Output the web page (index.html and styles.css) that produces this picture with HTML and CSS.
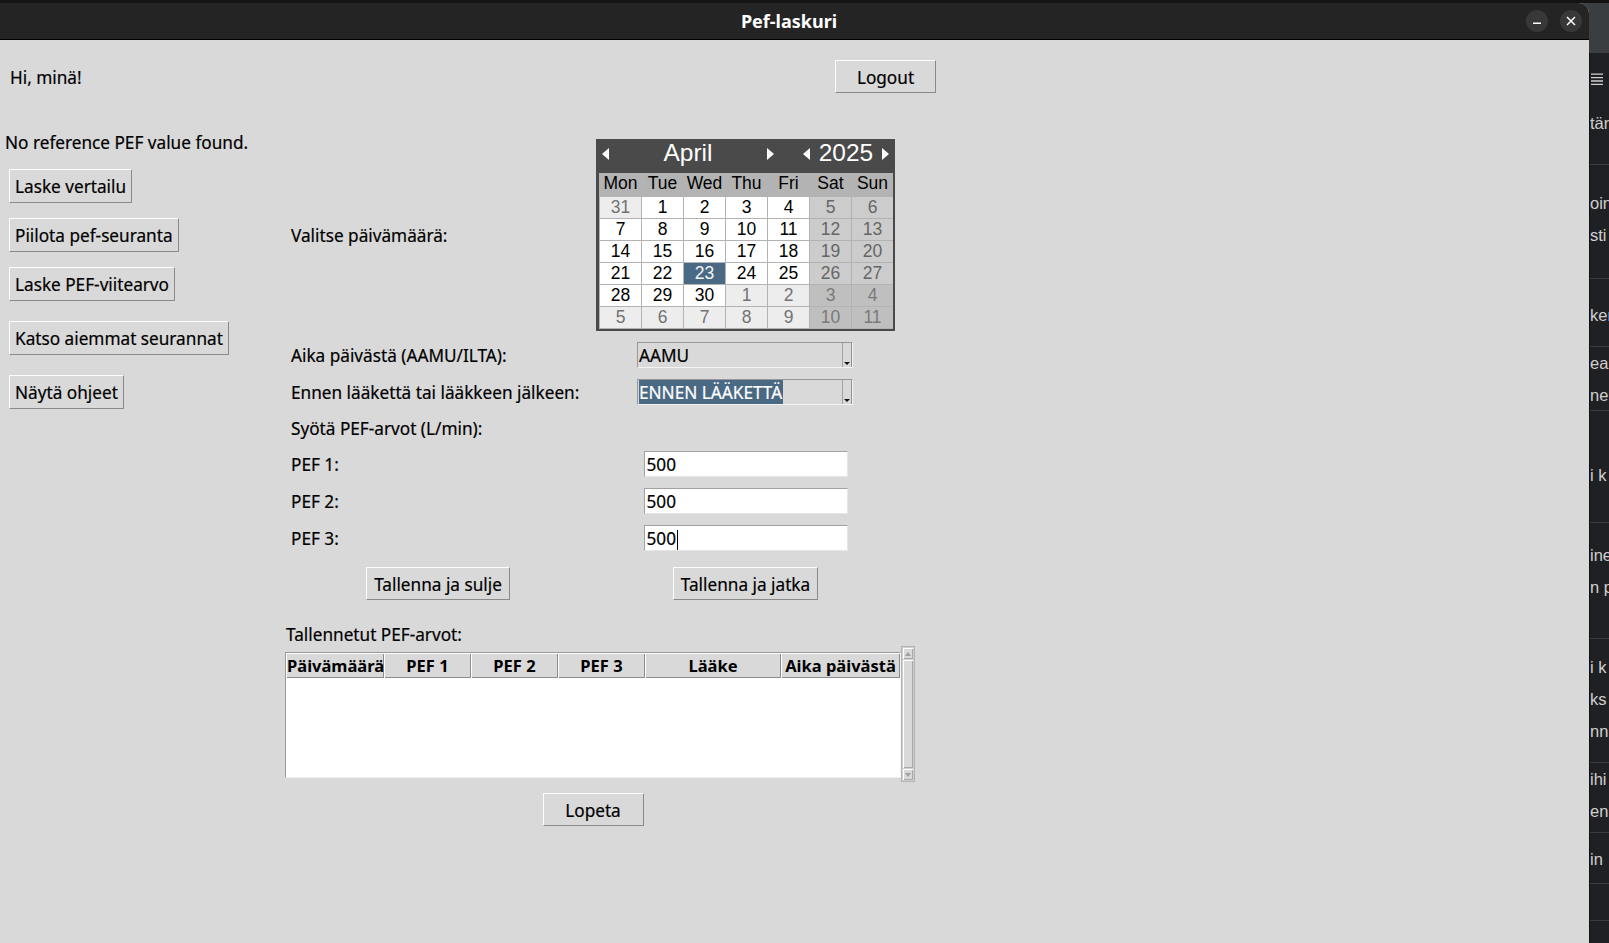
FILE: index.html
```html
<!DOCTYPE html>
<html lang="fi">
<head>
<meta charset="utf-8">
<title>Pef-laskuri</title>
<link rel="stylesheet" href="styles.css">
</head>
<body>
<div class="screen">
  <div class="topstrip"></div>
  <div class="desk">
    <div class="window">
      <header class="titlebar">
        <div class="title">Pef-laskuri</div>
        <div class="wm-buttons">
          <span class="wm-btn"><svg width="22" height="22" viewBox="0 0 22 22"><path d="M7 13.2H15" stroke="#fff" stroke-width="1.6"/></svg></span>
          <span class="wm-btn"><svg width="22" height="22" viewBox="0 0 22 22"><path d="M7 7L15 15M15 7L7 15" stroke="#fff" stroke-width="1.5"/></svg></span>
        </div>
      </header>
      <main class="content">
        <div class="topbar">
          <span class="greeting">Hi, minä!</span>
          <button class="btn btn-fixed">Logout</button>
        </div>
        <div class="body">
          <aside class="sidebar">
            <p class="noref">No reference PEF value found.</p>
            <button class="btn">Laske vertailu</button>
            <button class="btn">Piilota pef-seuranta</button>
            <button class="btn">Laske PEF-viitearvo</button>
            <button class="btn btn-gap">Katso aiemmat seurannat</button>
            <button class="btn btn-gap">Näytä ohjeet</button>
          </aside>
          <section class="form">
            <div class="frow">
              <span class="flabel">Valitse päivämäärä:</span>
              <div class="cal">
                <div class="cal-head">
                  <span class="cal-arrow cal-arrow-l"></span>
                  <span class="cal-month">April</span>
                  <span class="cal-arrow cal-arrow-r"></span>
                  <span class="cal-arrow cal-arrow-l cal-arrow-gap"></span>
                  <span class="cal-year">2025</span>
                  <span class="cal-arrow cal-arrow-r"></span>
                </div>
                <div class="cal-wd">
                  <span>Mon</span><span>Tue</span><span>Wed</span><span>Thu</span><span>Fri</span><span>Sat</span><span>Sun</span>
                </div>
                <div class="cal-days">
                  <span class="om">31</span><span>1</span><span>2</span><span>3</span><span>4</span><span class="we">5</span><span class="we">6</span>
                  <span>7</span><span>8</span><span>9</span><span>10</span><span>11</span><span class="we">12</span><span class="we">13</span>
                  <span>14</span><span>15</span><span>16</span><span>17</span><span>18</span><span class="we">19</span><span class="we">20</span>
                  <span>21</span><span>22</span><span class="sel">23</span><span>24</span><span>25</span><span class="we">26</span><span class="we">27</span>
                  <span>28</span><span>29</span><span>30</span><span class="om">1</span><span class="om">2</span><span class="omwe">3</span><span class="omwe">4</span>
                  <span class="om">5</span><span class="om">6</span><span class="om">7</span><span class="om">8</span><span class="om">9</span><span class="omwe">10</span><span class="omwe">11</span>
                </div>
              </div>
            </div>
            <div class="frow">
              <span class="flabel">Aika päivästä (AAMU/ILTA):</span>
              <div class="combo">
                <span class="combo-text">AAMU</span>
                <span class="combo-btn"><span class="combo-arrow"></span></span>
              </div>
            </div>
            <div class="frow">
              <span class="flabel">Ennen lääkettä tai lääkkeen jälkeen:</span>
              <div class="combo">
                <span class="combo-text combo-text-sel"><span class="combo-sel">ENNEN LÄÄKETTÄ</span></span>
                <span class="combo-btn"><span class="combo-arrow"></span></span>
              </div>
            </div>
            <div class="frow">
              <span class="flabel">Syötä PEF-arvot (L/min):</span>
            </div>
            <div class="frow">
              <span class="flabel">PEF 1:</span>
              <div class="entry">500</div>
            </div>
            <div class="frow">
              <span class="flabel">PEF 2:</span>
              <div class="entry">500</div>
            </div>
            <div class="frow">
              <span class="flabel">PEF 3:</span>
              <div class="entry">500<span class="caret"></span></div>
            </div>
            <div class="frow frow-btns">
              <button class="btn">Tallenna ja sulje</button>
              <button class="btn">Tallenna ja jatka</button>
            </div>
            <div class="saved-label">Tallennetut PEF-arvot:</div>
            <div class="tree-row">
              <div class="tree">
                <div class="tree-head">
                  <span class="th th-date">Päivämäärä</span>
                  <span class="th">PEF 1</span>
                  <span class="th">PEF 2</span>
                  <span class="th">PEF 3</span>
                  <span class="th">Lääke</span>
                  <span class="th">Aika päivästä</span>
                </div>
                <div class="tree-body"></div>
              </div>
              <div class="vscroll">
                <span class="sb-btn sb-up"></span>
                <span class="sb-thumb"></span>
                <span class="sb-btn sb-down"></span>
              </div>
            </div>
            <div class="lopeta-row">
              <button class="btn btn-fixed">Lopeta</button>
            </div>
          </section>
        </div>
      </main>
    </div>
    <div class="behind">
      <div class="behind-head"></div>
      <div class="behind-list">
        <div class="bl-item bl-menu"><svg width="12" height="14" viewBox="0 0 12 14"><path d="M0 1.2H12M0 4.6H12M0 8H12M0 11.4H12" stroke="#cfcfcf" stroke-width="1.3"/></svg></div>
        <div class="bl-item"><span>tär</span></div>
        <div class="bl-item"><span>oin</span><span>sti</span></div>
        <div class="bl-item"><span>ker</span></div>
        <div class="bl-item"><span>ea</span><span>ne</span></div>
        <div class="bl-item"><span>i k</span></div>
        <div class="bl-item"><span>ine</span><span>n p</span></div>
        <div class="bl-item"><span>i k</span><span>ks</span><span>nn</span></div>
        <div class="bl-item"><span>ihi</span><span>en</span></div>
        <div class="bl-item"><span>in</span></div>
        <div class="bl-item"></div>
        <div class="bl-rest"></div>
      </div>
    </div>
  </div>
</div>
</body>
</html>
```

FILE: styles.css
```css
* { box-sizing: border-box; }

html, body {
  margin: 0;
  padding: 0;
}

body {
  width: 1609px;
  height: 943px;
  overflow: hidden;
  background: #131313;
  font-family: "Noto Sans", "DejaVu Sans", sans-serif;
  font-size: 17.2px;
  color: #000;
}

.screen {
  display: flex;
  flex-direction: column;
  height: 943px;
}

.topstrip {
  height: 3px;
  flex: none;
  background: #131313;
}

.desk {
  flex: 1;
  display: flex;
  min-height: 0;
  background: #3b3e41;
}

/* ---------- main window ---------- */
.window {
  width: 1589px;
  flex: none;
  display: flex;
  flex-direction: column;
  background: #d9d9d9;
  border-top-right-radius: 10px;
  overflow: hidden;
}

.titlebar {
  height: 37px;
  flex: none;
  background: #242424;
  border-bottom: 1px solid #000;
  display: grid;
  grid-template-columns: 1fr auto 1fr;
  align-items: center;
}

.title {
  grid-column: 2;
  color: #fff;
  font-weight: 700;
  font-size: 18px;
  line-height: 24px;
  margin-right: 11px;
}

.wm-buttons {
  grid-column: 3;
  justify-self: end;
  display: flex;
  gap: 12px;
  padding-right: 7px;
}

.wm-btn {
  display: block;
  width: 22px;
  height: 22px;
  border-radius: 50%;
  background: #383838;
}

.wm-btn svg { display: block; }

.content {
  flex: 1;
  background: #d9d9d9;
  -webkit-text-stroke: 0.2px currentColor;
}

/* ---------- buttons ---------- */
.btn {
  font-family: inherit;
  font-size: 17.2px;
  color: #000;
  background: #d9d9d9;
  border: 1px solid;
  border-color: #fdfdfd #8a8a8a #8a8a8a #fdfdfd;
  border-radius: 0;
  padding: 5px 6px 3px;
  line-height: 23px;
  margin: 0;
  white-space: nowrap;
  cursor: default;
}

.btn-fixed {
  width: 101px;
  padding-left: 0;
  padding-right: 0;
  text-align: center;
}

/* ---------- top row ---------- */
.topbar {
  display: grid;
  grid-template-columns: 825px 101px;
  align-items: center;
  padding: 20px 0 0 10px;
}

.greeting,
.noref,
.flabel,
.saved-label {
  padding-top: 2px;
  line-height: 22px;
}

.body {
  display: flex;
  margin-top: 37px;
}

/* ---------- left column ---------- */
.sidebar {
  width: 286px;
  flex: none;
  display: flex;
  flex-direction: column;
  align-items: flex-start;
  gap: 15px;
  padding-left: 5px;
}

.noref { margin: 0; }

.sidebar .btn {
  margin-left: 4px;
  padding-left: 5px;
  padding-right: 5px;
  line-height: 24px;
}

.sidebar .btn-gap { margin-top: 5px; }

/* ---------- form ---------- */
.form {
  width: 629px;
  display: flex;
  flex-direction: column;
  gap: 11px;
  padding-top: 9px;
}

.frow {
  display: grid;
  grid-template-columns: 310px 299px;
  align-items: center;
}

.flabel { padding-left: 5px; }

.frow-btns { margin-top: 5px; }
.frow-btns .btn {
  justify-self: center;
  padding-left: 7px;
  padding-right: 7px;
}
.frow-btns .btn:first-child { margin-right: 6px; }

.saved-label { margin-top: 11px; }

/* ---------- calendar ---------- */
.cal {
  justify-self: center;
  width: 299px;
  background: #4a4a4a;
  border: solid #4a4a4a;
  border-width: 0 2px 2px 3px;
  font-family: "Liberation Sans", Arial, sans-serif;
  -webkit-text-stroke: 0;
}

.cal-head {
  height: 34px;
  display: flex;
  align-items: flex-start;
  padding-left: 3px;
  color: #fff;
}

.cal-arrow {
  flex: none;
  width: 0;
  height: 0;
  margin-top: 9px;
  border-top: 6px solid transparent;
  border-bottom: 6px solid transparent;
}

.cal-arrow-l { border-right: 7px solid #fff; }
.cal-arrow-r { border-left: 7px solid #fff; }
.cal-arrow-gap { margin-left: 29px; }

.cal-month,
.cal-year {
  text-align: center;
  font-size: 24.5px;
  line-height: 27px;
}

.cal-month { width: 158px; }
.cal-year { width: 72px; }

.cal-wd,
.cal-days {
  display: grid;
  grid-template-columns: repeat(7, 1fr);
  column-gap: 1px;
  padding-left: 1px;
  background: #b3b3b3;
}

.cal-wd { height: 23px; }

.cal-wd span {
  text-align: center;
  font-size: 17.5px;
  line-height: 20px;
}

.cal-days {
  grid-auto-rows: 21px;
  row-gap: 1px;
  padding-top: 1px;
  padding-bottom: 1px;
}

.cal-days span {
  background: #fff;
  text-align: center;
  font-size: 17.5px;
  line-height: 21px;
  color: #000;
}

.cal-days .we { background: #cccccc; color: #666; }
.cal-days .om { background: #ededed; color: #737373; }
.cal-days .omwe { background: #bfbfbf; color: #7a7a7a; }
.cal-days .sel { background: #4a6984; color: #f4f4f4; }

/* ---------- combobox ---------- */
.combo {
  justify-self: start;
  margin-left: 41px;
  width: 216px;
  height: 26px;
  display: flex;
  background: #d9d9d9;
  border: 1px solid;
  border-color: #979797 #f4f4f4 #f4f4f4 #979797;
}

.combo-text {
  flex: 1;
  padding-left: 1px;
  padding-top: 2px;
  line-height: 22px;
  white-space: nowrap;
  overflow: hidden;
}

.combo-text-sel { padding-top: 0; }

.combo-sel {
  display: block;
  width: fit-content;
  height: 24px;
  padding: 2px 1px 0 0;
  line-height: 22px;
  background: #4a6984;
  color: #fff;
}

.combo-btn {
  width: 10px;
  flex: none;
  display: flex;
  align-items: flex-end;
  justify-content: center;
  padding-bottom: 2px;
  border-left: 1px solid #a3a3a3;
  border-right: 1px solid #8f8f8f;
}

.combo-arrow {
  width: 0;
  height: 0;
  border-left: 3px solid transparent;
  border-right: 3px solid transparent;
  border-top: 3px solid #111;
}

/* ---------- entries ---------- */
.entry {
  justify-self: center;
  width: 204px;
  height: 26px;
  background: #fff;
  border: 1px solid;
  border-color: #a2a2a2 #e6e6e6 #e6e6e6 #a2a2a2;
  padding: 2px 2px 0;
  line-height: 22px;
  white-space: nowrap;
}

.caret {
  display: inline-block;
  width: 1px;
  height: 20px;
  background: #000;
  vertical-align: middle;
  margin-left: 1px;
}

/* ---------- treeview ---------- */
.tree-row {
  display: flex;
  align-items: flex-start;
  margin-left: -1px;
  margin-top: -11px;
}

.tree {
  width: 616px;
  height: 126px;
  margin-top: 6px;
  display: flex;
  flex-direction: column;
  background: #fff;
  border: 1px solid;
  border-color: #9a9a9a #f4f4f4 #ededed #9a9a9a;
}

.tree-head {
  display: grid;
  grid-template-columns: 98px 87px 87px 87px 136px 119px;
  height: 25px;
  flex: none;
  background: #d9d9d9;
}

.th {
  font-weight: 700;
  font-size: 16.5px;
  text-align: center;
  line-height: 25px;
  white-space: nowrap;
  overflow: hidden;
  -webkit-text-stroke: 0;
  box-shadow: inset 1px 1px #fff, inset -1px -1px #8c8c8c;
}

.th-date {
  text-align: left;
  padding-left: 1px;
}

.tree-body { flex: 1; }

.vscroll {
  width: 14px;
  height: 136px;
  display: flex;
  flex-direction: column;
  gap: 1px;
  padding: 1px;
  background: #cfcfcf;
  border: 1px solid #b4b4b4;
}

.sb-btn {
  height: 11px;
  flex: none;
  display: flex;
  align-items: center;
  justify-content: center;
  background: #d9d9d9;
  box-shadow: inset 1px 1px #fff, inset -1px -1px #a8a8a8;
}

.sb-up::after,
.sb-down::after {
  content: "";
  width: 0;
  height: 0;
  border-left: 3px solid transparent;
  border-right: 3px solid transparent;
}

.sb-up::after { border-bottom: 4px solid #a0a0a0; }
.sb-down::after { border-top: 4px solid #a0a0a0; }

.sb-thumb {
  flex: 1;
  background: #d9d9d9;
  box-shadow: inset 1px 1px #fff, inset -1px -1px #a8a8a8;
}

.lopeta-row {
  width: 614px;
  display: flex;
  justify-content: center;
}

/* ---------- window behind ---------- */
.behind {
  width: 20px;
  flex: none;
  display: flex;
  flex-direction: column;
  overflow: hidden;
}

.behind-head {
  height: 50px;
  flex: none;
  background: #3b3e41;
}

.behind-list {
  flex: 1;
  display: grid;
  grid-template-rows: 53px 59px 114px 68px 64px 112px 116px 124px 70px 51px 37px 1fr;
  background: #1f2023;
  border-left: 1px solid #101010;
  font-family: "Liberation Sans", Arial, sans-serif;
  font-size: 16.5px;
  color: #cfcfcf;
}

.bl-item {
  display: flex;
  flex-direction: column;
  justify-content: flex-start;
  border-bottom: 1px solid #3a3c40;
  line-height: 32px;
  white-space: nowrap;
  overflow: hidden;
}

.bl-item:nth-child(2) { padding-top: 1px; }
.bl-item:nth-child(3) { padding-top: 22px; }
.bl-item:nth-child(4) { padding-top: 20px; }
.bl-item:nth-child(6) { padding-top: 48px; }
.bl-item:nth-child(7) { padding-top: 16px; }
.bl-item:nth-child(8) { padding-top: 12px; }
.bl-item:nth-child(10) { padding-top: 10px; }

.bl-menu {
  justify-content: center;
  border-bottom: 0;
  padding-left: 1px;
}

.bl-menu svg { display: block; }
```
